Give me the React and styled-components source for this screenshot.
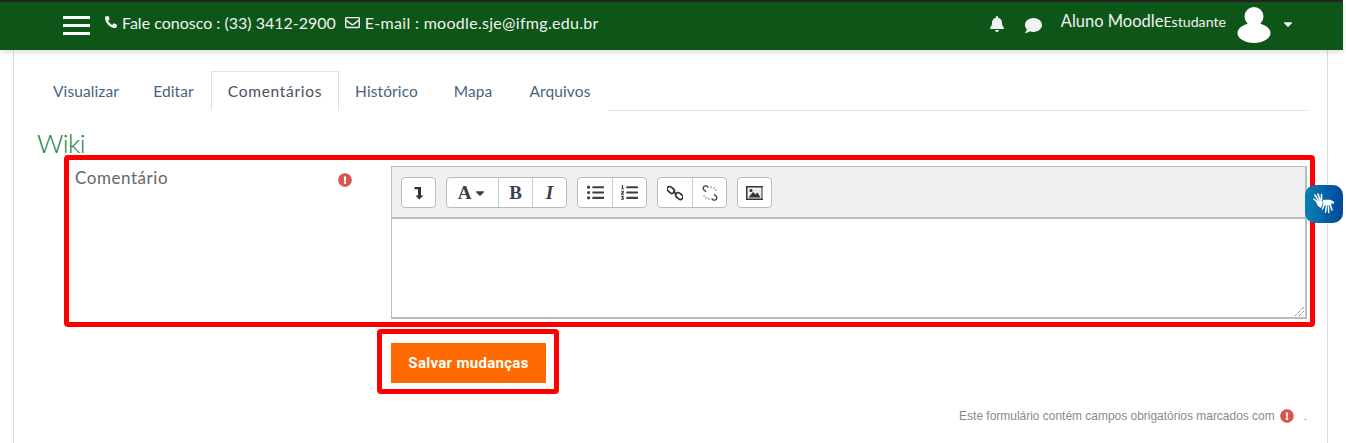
import styled, { createGlobalStyle } from 'styled-components'
import {
  FaBell,
  FaCaretDown,
  FaComment,
  FaExclamationCircle,
  FaListOl,
  FaListUl,
  FaPhoneAlt,
  FaRegEnvelope,
} from 'react-icons/fa'

const GlobalStyle = createGlobalStyle`
  html, body {
    margin: 0;
    background: #fff;
  }
  body {
    font-family: Lato, "Liberation Sans", sans-serif;
    overflow: hidden;
  }
  * {
    box-sizing: border-box;
  }
`

const tabs = [
  { label: 'Visualizar', width: 100 },
  { label: 'Editar', width: 75 },
  { label: 'Comentários', width: 128, active: true },
  { label: 'Histórico', width: 95 },
  { label: 'Mapa', width: 78 },
  { label: 'Arquivos', width: 96 },
]

const App = () => {
  return (
    <Page>
      <GlobalStyle />
      <Navbar>
        <NavLeft>
          <Burger>
            <span />
            <span />
            <span />
          </Burger>
          <Contact>
            <FaPhoneAlt size={12} />
            <ContactText>Fale conosco : (33) 3412-2900</ContactText>
          </Contact>
          <Contact>
            <FaRegEnvelope size={15} />
            <ContactText $spaced>E-mail : moodle.sje@ifmg.edu.br</ContactText>
          </Contact>
        </NavLeft>
        <NavRight>
          <FaBell size={16} />
          <ChatIcon>
            <FaComment size={17} />
          </ChatIcon>
          <UserName>
            Aluno Moodle<small>Estudante</small>
          </UserName>
          <Avatar viewBox='0 0 34 36'>
            <circle cx='17' cy='9.5' r='9.5' fill='#fff' />
            <ellipse cx='17' cy='26' rx='16.5' ry='10' fill='#fff' />
          </Avatar>
          <Caret>
            <FaCaretDown size={14} />
          </Caret>
        </NavRight>
      </Navbar>

      <Main>
        <Tabs>
          {tabs.map((tab) => (
            <Tab key={tab.label} $active={tab.active} $width={tab.width}>
              {tab.label}
            </Tab>
          ))}
        </Tabs>
        <Title>Wiki</Title>

        <FormRow>
          <Highlight />
          <Label>
            Comentário
            <Required>
              <FaExclamationCircle size={14} />
            </Required>
          </Label>
          <Editor>
            <Toolbar>
              <Group>
                <ToolButton>
                  <svg width='10' height='14' viewBox='0 0 10 14'>
                    <path d='M0.5 1h6.5v8.5H9.5L5.2 13.5 1.5 9.5H4V3.2H0.5z' fill='#333' />
                  </svg>
                </ToolButton>
              </Group>
              <Group>
                <ToolButton $wide>
                  <Letter>A</Letter>
                  <FaCaretDown size={14} />
                </ToolButton>
                <ToolButton>
                  <Letter>B</Letter>
                </ToolButton>
                <ToolButton>
                  <Letter $italic>I</Letter>
                </ToolButton>
              </Group>
              <Group>
                <ToolButton>
                  <FaListUl size={17} />
                </ToolButton>
                <ToolButton>
                  <FaListOl size={17} />
                </ToolButton>
              </Group>
              <Group>
                <ToolButton>
                  <svg width='16' height='16' viewBox='0 0 16 16' fill='none' stroke='#333' strokeWidth='1.7'>
                    <rect x='-0.2' y='2.6' width='8' height='5' rx='2.5' transform='rotate(40 4 5)' />
                    <rect x='8.2' y='8.4' width='8' height='5' rx='2.5' transform='rotate(40 12 11)' />
                    <path d='M6.2 6.4 9.8 9.6' />
                  </svg>
                </ToolButton>
                <ToolButton>
                  <svg width='16' height='16' viewBox='0 0 16 16' fill='none' stroke='#444' strokeWidth='1.4'>
                    <path d='M6.5 2.5 5 1.2C3.8.4 2.2 1 1.5 2.2 1 3.2 1.3 4.4 2.2 5.2L4 6.6' />
                    <path d='M9.5 13.5 11 14.8c1.2.8 2.8.2 3.5-1 .5-1 .2-2.2-.7-3L12 9.4' />
                    <path d='M9 1v2.5M12.8 2 11 4M15 5h-2.5M1 11h2.5M3.2 14 5 12M7 15v-2.5' strokeWidth='0.8' stroke='#777' />
                  </svg>
                </ToolButton>
              </Group>
              <Group>
                <ToolButton>
                  <svg width='17' height='14' viewBox='0 0 17 14'>
                    <rect x='0.75' y='0.75' width='15.5' height='12.5' fill='#e8eef4' stroke='#333' strokeWidth='1.5' />
                    <path d='M2.5 11.5 L7 6 L9.5 8.5 L11.5 6.5 L14.5 11.5z' fill='#333' />
                    <circle cx='5' cy='4.5' r='1.5' fill='#333' />
                    <path d='M16.5 1v12' stroke='#c98a3a' strokeWidth='1' />
                  </svg>
                </ToolButton>
              </Group>
            </Toolbar>
            <TextArea>
              <Grip viewBox='0 0 10 10'>
                <path d='M1 10 10 1M5 10l5-5' stroke='#555' strokeWidth='1' strokeDasharray='1 1' />
              </Grip>
            </TextArea>
          </Editor>
        </FormRow>

        <Actions>
          <SaveButton>
            <Highlight $tight />
            Salvar mudanças
          </SaveButton>
        </Actions>

        <Footnote>
          Este formulário contém campos obrigatórios marcados com
          <FootIcon>
            <FaExclamationCircle size={14} />
          </FootIcon>
          .
        </Footnote>
      </Main>

      <SignWidget>
        <svg width='22' height='22' viewBox='0 0 22 22' fill='none' stroke='#fff' strokeLinecap='round'>
          <path d='M2 2l3 5M5 1l2 6M8.5 1.5 8.5 7M1 6l3.5 3.5' strokeWidth='1.6' />
          <path d='M4 8h5v4l-1.5 2.5-2.5-2z' fill='#fff' strokeWidth='1' />
          <path d='M11 8h6l3 1.5' strokeWidth='2.4' />
          <path d='M11 12l-1.5 4M13.5 13l-1 6M15.5 13.5l.2 6M17.5 12.5l1.5 4.5' strokeWidth='1.5' />
          <path d='M11 9h7v3h-7z' fill='#fff' strokeWidth='1' />
        </svg>
      </SignWidget>
    </Page>
  )
}

const Page = styled.div`
  position: relative;
  width: 1346px;
  height: 443px;
  overflow: hidden;
`

const Navbar = styled.header`
  width: 1343px;
  height: 50px;
  border-top: 2px solid #222;
  background: #0e5518;
  color: #f2f2f2;
  display: flex;
  align-items: center;
  justify-content: space-between;
  padding: 0 48.5px 5px 63px;
  box-shadow: 0 2px 6px rgba(0, 0, 0, 0.15);
  position: relative;
`

const NavLeft = styled.div`
  display: flex;
  align-items: center;
`

const Burger = styled.div`
  width: 27px;
  display: flex;
  flex-direction: column;
  gap: 5px;
  margin-right: 15px;
  margin-top: 3px;

  span {
    display: block;
    height: 3px;
    background: #fff;
  }
`

const Contact = styled.div`
  display: flex;
  align-items: center;
  gap: 5px;
  margin-right: 9px;
  margin-top: -3px;
`

const ContactText = styled.span`
  font-size: 16px;
  letter-spacing: ${(props) => (props.$spaced ? '0.3px' : '0')};
`

const NavRight = styled.div`
  display: flex;
  align-items: center;
`

const ChatIcon = styled.span`
  display: flex;
  margin-left: 20px;
  margin-top: 4px;
`

const UserName = styled.div`
  font-size: 16.5px;
  margin-left: 19px;
  margin-top: -6px;

  small {
    font-size: 14.2px;
  }
`

const Avatar = styled.svg`
  width: 34px;
  height: 36px;
  margin-left: 11px;
  margin-top: 3px;
`

const Caret = styled.span`
  display: flex;
  margin-left: 9.5px;
`

const Main = styled.main`
  width: 1315px;
  height: 393px;
  margin-left: 13px;
  border-left: 1px solid #ddd;
  border-right: 1px solid #ddd;
  padding: 21px 20px 0 22px;
`

const Tabs = styled.nav`
  display: flex;
  height: 40px;
  border-bottom: 1px solid #dee2e6;
`

const Tab = styled.div`
  width: ${(props) => props.$width}px;
  height: 40px;
  display: flex;
  align-items: center;
  justify-content: center;
  font-size: 15.5px;
  letter-spacing: ${(props) => (props.$active ? '0.7px' : '0.1px')};
  background: #fff;
  color: ${(props) => (props.$active ? '#495057' : '#4d5f80')};
  border: 1px solid ${(props) => (props.$active ? '#dee2e6' : 'transparent')};
  border-bottom-color: ${(props) => (props.$active ? '#fff' : 'transparent')};
`

const Title = styled.h2`
  margin: 17px 0 0 1px;
  height: 27px;
  font-size: 26px;
  line-height: 30px;
  letter-spacing: -0.6px;
  font-weight: 300;
  color: #14803a;
`

const FormRow = styled.div`
  position: relative;
  display: flex;
  margin: 11px 0 0 0;
`

const Highlight = styled.div`
  position: absolute;
  pointer-events: none;
  border: 5px solid #f00;
  border-radius: 4px;
  top: ${(props) => (props.$tight ? '-14px' : '-11px')};
  bottom: ${(props) => (props.$tight ? '-11px' : '-8px')};
  left: ${(props) => (props.$tight ? '-14px' : '28px')};
  right: ${(props) => (props.$tight ? '-13px' : '-8px')};
`

const Label = styled.label`
  width: 355px;
  flex: none;
  position: relative;
  padding: 1px 0 0 39px;
  font-size: 17px;
  letter-spacing: 0.55px;
  color: #666;
`

const Required = styled.span`
  position: absolute;
  left: 302px;
  top: 4px;
  color: #d9534f;
`

const Editor = styled.div`
  flex: 1;
  border: 2px solid #bbb;
  border-top-width: 1px;
  border-left-width: 1px;
`

const Toolbar = styled.div`
  height: 52px;
  background: #f0f0f0;
  border-bottom: 2px solid #bbb;
  padding: 10px 9px;
  display: flex;
  gap: 10px;
`

const Group = styled.div`
  display: flex;
  height: 31px;
  background: #fff;
  border: 1px solid #bbb;
  border-radius: 4px;
`

const ToolButton = styled.div`
  width: ${(props) => (props.$wide ? '51px' : '34px')};
  display: flex;
  align-items: center;
  justify-content: center;
  gap: 2px;
  color: #3a3f4a;

  &:only-child {
    width: 33px;
  }

  & + & {
    border-left: 1px solid #ccc;
  }
`

const Letter = styled.span`
  font-family: "Liberation Serif", serif;
  font-size: 19px;
  font-weight: 700;
  font-style: ${(props) => (props.$italic ? 'italic' : 'normal')};
  line-height: 1;
`

const TextArea = styled.div`
  height: 98px;
  position: relative;
  background: #fff;
`

const Grip = styled.svg`
  position: absolute;
  right: 1px;
  bottom: 1px;
  width: 10px;
  height: 10px;
`

const Actions = styled.div`
  margin: 24px 0 0 355px;
`

const SaveButton = styled.div`
  position: relative;
  width: 155px;
  height: 40px;
  background: #ff6a00;
  color: #fff;
  font-family: Roboto, "Liberation Sans", sans-serif;
  font-weight: 700;
  font-size: 15px;
  letter-spacing: 0.3px;
  display: flex;
  align-items: center;
  justify-content: center;
`

const Footnote = styled.div`
  margin-top: 26px;
  display: flex;
  align-items: center;
  justify-content: flex-end;
  font-family: "Liberation Sans", sans-serif;
  font-size: 11.96px;
  color: #8a8a8a;
`

const FootIcon = styled.span`
  display: flex;
  color: #d9534f;
  margin: 0 10px 0 5px;
`

const SignWidget = styled.div`
  position: absolute;
  left: 1305px;
  top: 185px;
  width: 38px;
  height: 38px;
  border-radius: 10px;
  background: linear-gradient(90deg, #0a80b4, #00479a);
  display: flex;
  align-items: center;
  justify-content: center;
`

export default App
